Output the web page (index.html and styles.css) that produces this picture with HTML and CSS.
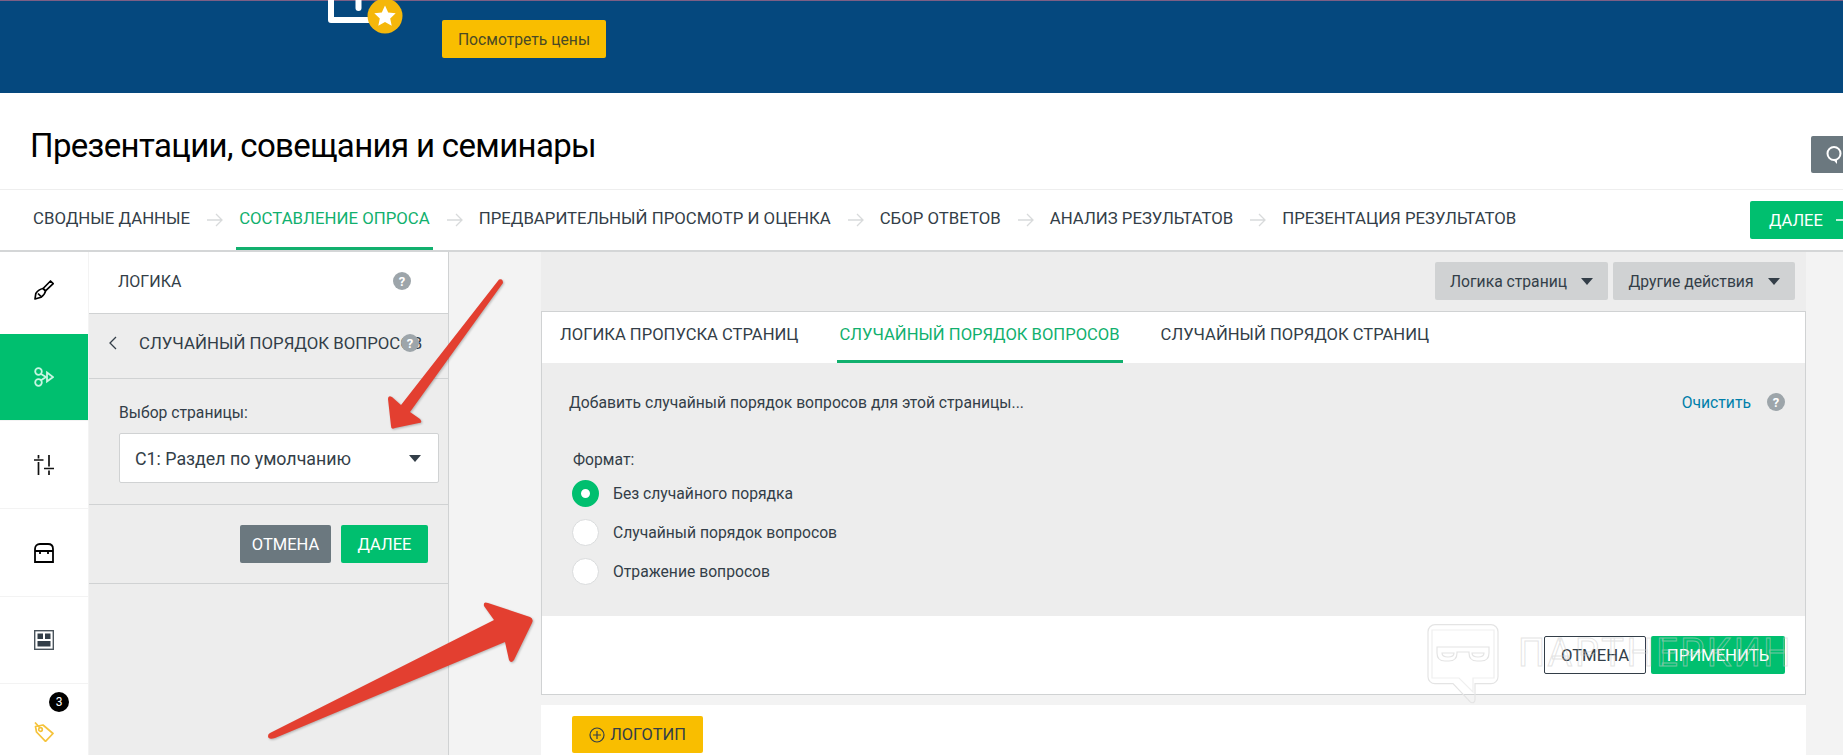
FILE: index.html
```html
<!DOCTYPE html>
<html lang="ru">
<head>
<meta charset="utf-8">
<title>Презентации, совещания и семинары</title>
<link rel="stylesheet" href="styles.css">
</head>
<body>
<div class="page">
  <header class="banner">
    <svg class="banner-icon" width="70" height="36" viewBox="0 0 70 36">
      <path d="M4 0V20H50" fill="none" stroke="#fff" stroke-width="6" stroke-linejoin="round"/>
      <path d="M31.5 0V8" fill="none" stroke="#fff" stroke-width="6" stroke-linecap="round"/>
      <circle cx="58" cy="16" r="17.5" fill="#f5b70a"/>
      <path d="M58 5.500l3.200 6.900 7.500.9-5.500 5.100 1.500 7.400-6.700-3.700-6.700 3.700 1.500-7.400-5.500-5.100 7.500-.9z" fill="#fff"/>
    </svg>
    <button class="btn btn-price">Посмотреть цены</button>
  </header>

  <div class="title-row">
    <h1 class="title">Презентации, совещания и семинары</h1>
    <div class="comment-btn">
      <svg width="22" height="20" viewBox="0 0 22 20"><circle cx="9" cy="8.500" r="6.500" fill="none" stroke="#fff" stroke-width="2"/><path d="M7.500 14h4.500v5z" fill="#fff"/></svg>
    </div>
  </div>

  <nav class="steps">
    <a class="step">СВОДНЫЕ ДАННЫЕ</a>
    <svg class="step-arrow" width="16" height="14" viewBox="0 0 16 14"><path d="M0 7H15M9 1l6 6-6 6" fill="none" stroke="#d8dadb" stroke-width="1.300"/></svg>
    <a class="step step-active">СОСТАВЛЕНИЕ ОПРОСА</a>
    <svg class="step-arrow" width="16" height="14" viewBox="0 0 16 14"><path d="M0 7H15M9 1l6 6-6 6" fill="none" stroke="#d8dadb" stroke-width="1.300"/></svg>
    <a class="step">ПРЕДВАРИТЕЛЬНЫЙ ПРОСМОТР И ОЦЕНКА</a>
    <svg class="step-arrow" width="16" height="14" viewBox="0 0 16 14"><path d="M0 7H15M9 1l6 6-6 6" fill="none" stroke="#d8dadb" stroke-width="1.300"/></svg>
    <a class="step">СБОР ОТВЕТОВ</a>
    <svg class="step-arrow" width="16" height="14" viewBox="0 0 16 14"><path d="M0 7H15M9 1l6 6-6 6" fill="none" stroke="#d8dadb" stroke-width="1.300"/></svg>
    <a class="step">АНАЛИЗ РЕЗУЛЬТАТОВ</a>
    <svg class="step-arrow" width="16" height="14" viewBox="0 0 16 14"><path d="M0 7H15M9 1l6 6-6 6" fill="none" stroke="#d8dadb" stroke-width="1.300"/></svg>
    <a class="step">ПРЕЗЕНТАЦИЯ РЕЗУЛЬТАТОВ</a>
    <button class="btn btn-next">ДАЛЕЕ
      <svg class="next-arrow" width="20" height="14" viewBox="0 0 20 14"><path d="M0 7H18M12 1l6 6-6 6" fill="none" stroke="#fff" stroke-width="1.500"/></svg>
    </button>
  </nav>

  <div class="workspace">
    <aside class="rail">
      <div class="rail-item rail-first">
        <svg width="20" height="20" viewBox="0 0 20 20" fill="none" stroke="#000" stroke-width="1.700" stroke-linejoin="round"><path d="M16.500 1l2.700 2.700-7.700 7.200-2.400-2.400z"/><path d="M9 8.500l2.500 2.500c-.4 3.200-2.500 4.800-4.500 6.200L1 19l.8-5.500C3.500 11 6 9 9 8.500z"/><path d="M4 13.500l3 3"/></svg>
      </div>
      <div class="rail-item rail-active">
        <svg width="20" height="20" viewBox="0 0 20 20" fill="none" stroke="#c8f5e2" stroke-width="1.800"><circle cx="4.500" cy="4.500" r="3.300"/><circle cx="4.500" cy="15.500" r="3.300"/><path d="M7 7l5 3-5 3.200"/><path d="M13 5.500l6 4.500-6 4.500z"/></svg>
      </div>
      <div class="rail-item rail-line">
        <svg width="20" height="20" viewBox="0 0 20 20" fill="none" stroke="#111" stroke-width="1.700"><path d="M4.500 0v3.500M4.500 7v13M15 0v11.500M15 15.500V20M0 5h9.500M10 13.500h10"/></svg>
      </div>
      <div class="rail-item rail-line">
        <svg width="20" height="20" viewBox="0 0 20 20" fill="none" stroke="#000" stroke-width="1.800"><path d="M1 19V6c0-3 2-5 5-5h8c3 0 5 2 5 5v13z"/><path d="M1 8h18M6 8v3M14 8v3"/></svg>
      </div>
      <div class="rail-item rail-line">
        <svg width="20" height="20" viewBox="0 0 20 20"><rect x=".7" y=".7" width="18.600" height="18.600" fill="#fff" stroke="#4a545c" stroke-width="1.400"/><path d="M3.500 3.500h5.500v5.500H3.500zM11 3.500h5.500v5.500H11zM3.500 11h13v5.500h-13z" fill="#333e48"/></svg>
      </div>
      <div class="rail-item rail-line rail-last">
        <span class="rail-badge">3</span>
        <svg width="20" height="20" viewBox="0 0 20 20" fill="none" stroke="#f5c33b" stroke-width="1.700" stroke-linejoin="round"><path d="M1.500 4.500L9 3l10 8.500-7.500 7.800L2.500 10z"/><circle cx="6.500" cy="7.500" r="1.800"/><path d="M6 6L1 .5"/></svg>
      </div>
    </aside>

    <section class="panel">
      <div class="panel-head">
        <span>ЛОГИКА</span>
        <span class="help">?</span>
      </div>
      <div class="panel-sub">
        <svg class="chevron" width="9" height="14" viewBox="0 0 9 14"><path d="M8 1L2 7l6 6" fill="none" stroke="#333e48" stroke-width="1.300"/></svg>
        <span>СЛУЧАЙНЫЙ ПОРЯДОК ВОПРОСОВ</span>
        <span class="help help-over">?</span>
      </div>
      <div class="panel-field">
        <label class="field-label">Выбор страницы:</label>
        <div class="select">
          <span>С1: Раздел по умолчанию</span>
          <i class="caret"></i>
        </div>
      </div>
      <div class="panel-actions">
        <button class="btn btn-cancel-gray">ОТМЕНА</button>
        <button class="btn btn-green">ДАЛЕЕ</button>
      </div>
    </section>

    <main class="canvas">
      <div class="column">
        <div class="toolbar">
          <button class="btn btn-tool">Логика страниц <i class="caret"></i></button>
          <button class="btn btn-tool">Другие действия <i class="caret"></i></button>
        </div>
        <div class="card">
          <div class="tabs">
            <a class="tab">ЛОГИКА ПРОПУСКА СТРАНИЦ</a>
            <a class="tab tab-active">СЛУЧАЙНЫЙ ПОРЯДОК ВОПРОСОВ</a>
            <a class="tab">СЛУЧАЙНЫЙ ПОРЯДОК СТРАНИЦ</a>
          </div>
          <div class="card-body">
            <div class="desc-row">
              <span>Добавить случайный порядок вопросов для этой страницы...</span>
              <a class="clear">Очистить</a>
              <span class="help">?</span>
            </div>
            <div class="format-label">Формат:</div>
            <div class="radio-row"><i class="radio radio-on"></i><span>Без случайного порядка</span></div>
            <div class="radio-row"><i class="radio"></i><span>Случайный порядок вопросов</span></div>
            <div class="radio-row"><i class="radio"></i><span>Отражение вопросов</span></div>
          </div>
          <div class="card-foot">
            <button class="btn btn-outline">ОТМЕНА</button>
            <button class="btn btn-apply">ПРИМЕНИТЬ</button>
          </div>
        </div>
        <div class="logo-card">
          <button class="btn btn-logo">
            <svg width="16" height="16" viewBox="0 0 16 16" fill="none" stroke="#333e48" stroke-width="1.200"><circle cx="8" cy="8" r="7"/><path d="M8 4v8M4 8h8"/></svg>
            ЛОГОТИП
          </button>
        </div>
      </div>
    </main>
  </div>

  <div class="watermark">
    <svg width="72" height="80" viewBox="0 0 72 80" fill="none" stroke="#e4e4e4" stroke-width="1.200">
      <path d="M8 .7h56a7 7 0 0 1 7 7v45a7 7 0 0 1-7 7H48v16c0 3-3 4-5 2L26 59.700H8a7 7 0 0 1-7-7v-45a7 7 0 0 1 7-7z"/>
      <path d="M5 6h62v48H46v14L32 54H5z" stroke="#efefef"/>
      <path d="M10 23h52v6c0 5-3 8-8 8h-4c-5 0-8-3-8-8v-1h-12v1c0 5-3 8-8 8h-4c-5 0-8-3-8-8z"/>
      <path d="M15 29h12c0 3-3 4-6 4s-6-1-6-4zM45 29h12c0 3-3 4-6 4s-6-1-6-4z"/>
    </svg>
    <span class="wm-text">ПАРТНЕРКИН</span>
  </div>

  <svg class="arrows" width="1843" height="755" viewBox="0 0 1843 755">
    <path d="M499 279.500Q503 278 503 283L410 412 420 419Q423 423 419 423L395 428Q391 430 391 426L388 399Q388 395 392 397L401 405z" fill="#e33f30"/>
    <path d="M270 733L494 620 484 606Q483 601 488 603L530 617Q534 619 532 623L514 660Q511 664 509 660L505 642 275 738Q268 740 268 736Q268 734 270 733z" fill="#e33f30"/>
  </svg>
</div>
</body>
</html>
```

FILE: styles.css
```css
* { box-sizing: border-box; }
html, body { margin: 0; padding: 0; }
body { font-family: Roboto, "Noto Sans", sans-serif; color: #333e48; background: #fff; }
.page { position: relative; width: 1843px; height: 755px; overflow: hidden; }

.btn { font-family: inherit; border: 0; border-radius: 2px; cursor: pointer; padding: 0; display: inline-flex; align-items: center; justify-content: center; }

.banner { height: 93px; background: #05487e; border-top: 1px solid #7d5f85; display: flex; align-items: flex-start; padding-left: 327px; padding-top: 19px; }
.banner-icon { margin-top: -20px; margin-right: 45px; overflow: visible; }
.btn-price { width: 164px; height: 38px; background: #f9be00; color: #4a4a25; font-size: 15.700px; }

.title-row { height: 97px; border-bottom: 1px solid #eeeeee; display: flex; align-items: center; padding-left: 30px; }
.title { margin: 9px 0 0; font-size: 33px; letter-spacing: -.65px; font-weight: 400; color: #000; }
.comment-btn { width: 32px; height: 37px; margin: 27px 0 0 auto; background: #6b787f; border-radius: 2px 0 0 2px; display: flex; align-items: center; padding-left: 14px; overflow: hidden; flex-shrink: 0; }
.comment-btn svg { flex-shrink: 0; }

.steps { height: 62px; border-bottom: 2px solid #d4d6d7; display: flex; align-items: center; padding-left: 30px; font-size: 16.800px; }
.step { height: 60px; padding: 0 3px 2px; display: flex; align-items: center; border-bottom: 3px solid transparent; }
.step-active { color: #11b06e; border-bottom-color: #11b06e; }
.step-arrow { margin: 0 13px 0 14px; flex-shrink: 0; }
.btn-next { width: 93px; height: 38px; margin-left: auto; background: #00bf6f; color: #fff; font-size: 16.500px; border-radius: 2px 0 0 2px; justify-content: flex-start; padding-left: 19px; gap: 13px; overflow: hidden; flex-shrink: 0; }
.next-arrow { flex-shrink: 0; }

.workspace { display: flex; height: 503px; }

.rail { width: 88px; background: #fff; display: grid; grid-template-rows: 82px 86px 88px 88px 87px 72px; flex-shrink: 0; }
.rail-item { display: flex; align-items: center; justify-content: center; position: relative; }
.rail-first { padding-bottom: 6px; }
.rail-active { background: #00bf6f; }
.rail-line { border-top: 1px solid #f3f3f3; }
.rail-last { padding-top: 24px; }
.rail-badge { position: absolute; left: 49px; top: 8px; width: 20px; height: 20px; border-radius: 50%; background: #000; color: #fff; font-size: 12px; display: flex; align-items: center; justify-content: center; }

.panel { width: 361px; background: #ededed; border-right: 1px solid #d0d2d3; border-left: 1px solid #f3f3f3; flex-shrink: 0; }
.panel-head { height: 62px; background: #fff; border-bottom: 1px solid #d0d2d3; display: flex; align-items: center; padding: 0 37px 3px 29px; justify-content: space-between; font-size: 16px; }
.panel-sub { position: relative; height: 65px; border-bottom: 1px solid #d0d2d3; display: flex; align-items: center; padding-left: 19px; gap: 22px; font-size: 16.800px; white-space: nowrap; padding-bottom: 6px; }
.chevron { flex-shrink: 0; }
.help { width: 18px; height: 18px; border-radius: 50%; background: #9da5aa; color: #fff; font-size: 13px; font-weight: 700; display: inline-flex; align-items: center; justify-content: center; flex-shrink: 0; }
.help-over { position: absolute; left: 312px; top: 20px; }
.panel-field { height: 126px; border-bottom: 1px solid #d0d2d3; padding: 24px 9px 0 30px; }
.field-label { display: block; font-size: 15.700px; line-height: 20px; margin-bottom: 10px; }
.select { height: 50px; background: #fff; border: 1px solid #d0d2d3; border-radius: 2px; display: flex; align-items: center; justify-content: space-between; padding: 0 17px 0 15px; font-size: 17.800px; }
.caret { display: inline-block; width: 0; height: 0; border-left: 6.500px solid transparent; border-right: 6.500px solid transparent; border-top: 7px solid #333e48; flex-shrink: 0; }
.panel-actions { height: 79px; border-bottom: 1px solid #d0d2d3; display: flex; justify-content: flex-end; gap: 10px; padding: 20px 20px 0 0; }
.btn-cancel-gray { width: 91px; height: 38px; background: #6b787f; color: #fff; font-size: 16.500px; }
.btn-green { width: 87px; height: 38px; background: #00bf6f; color: #fff; font-size: 16.500px; }

.canvas { flex: 1; background: #f3f3f3; padding: 0 37px 0 92px; min-width: 0; }
.column { display: flex; flex-direction: column; }
.toolbar { height: 59px; background: #ededed; display: flex; justify-content: flex-end; gap: 5px; padding: 10px 11px 0 0; }
.btn-tool { height: 38px; background: #d0d2d3; color: #333e48; font-size: 15.700px; gap: 14px; padding: 0 16px; white-space: nowrap; }
.btn-tool:first-child { width: 173px; }
.btn-tool:last-child { width: 182px; }

.card { height: 384px; background: #fff; border: 1px solid #d0d2d3; display: flex; flex-direction: column; }
.tabs { height: 51px; flex-shrink: 0; display: flex; gap: 35px; padding-left: 15px; font-size: 16.600px; }
.tab { padding: 0 3px 3px; display: flex; align-items: center; border-bottom: 3px solid transparent; }
.tab-active { color: #11b06e; border-bottom-color: #11b06e; }

.card-body { height: 253px; background: #ededed; padding: 0 20px 0 27px; font-size: 15.700px; flex-shrink: 0; }
.desc-row { height: 78px; display: flex; align-items: center; }
.clear { margin-left: auto; margin-right: 16px; color: #007faa; }
.format-label { margin: 10px 0 0 4px; height: 18px; line-height: 18px; color: #333e48; }
.radio-row { height: 39px; display: flex; align-items: center; gap: 14px; padding-left: 3px; }
.format-label + .radio-row { margin-top: 5px; }
.radio { width: 27px; height: 27px; border-radius: 50%; background: #fff; border: 1px solid #dadcdd; flex-shrink: 0; }
.radio-on { background: #fff; border: 9px solid #00bf6f; }

.card-foot { flex: 1; display: flex; justify-content: flex-end; gap: 5px; padding: 20px 20px 0 0; }
.btn-outline { width: 102px; height: 38px; background: #fff; border: 1px solid #333e48; color: #333e48; font-size: 16.700px; }
.btn-apply { width: 134px; height: 38px; background: #00bf6f; color: #fff; font-size: 16.700px; }

.logo-card { height: 60px; margin-top: 10px; background: #fff; padding: 11px 0 0 31px; }
.btn-logo { width: 131px; height: 37px; background: #f9be00; color: #333e48; font-size: 16.400px; gap: 5px; }

.watermark { position: absolute; left: 1427px; top: 624px; display: flex; align-items: flex-start; gap: 19px; pointer-events: none; }
.wm-text { font-size: 38px; line-height: 38px; margin-top: 10px; letter-spacing: 2.500px; color: transparent; -webkit-text-stroke: 1px rgba(205,205,205,.55); white-space: nowrap; }
.arrows { position: absolute; left: 0; top: 0; pointer-events: none; filter: drop-shadow(1px 1px 1px rgba(0,0,0,.25)); }
```
